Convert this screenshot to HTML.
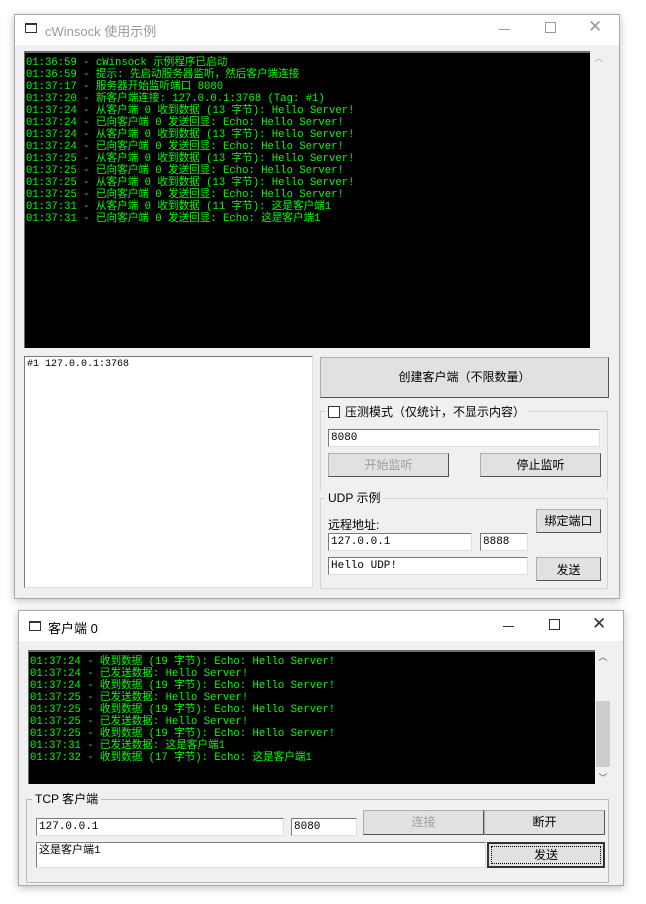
<!DOCTYPE html><html><head><meta charset="utf-8"><style>
*{margin:0;padding:0;box-sizing:border-box}
body{width:646px;height:904px;background:#fff;position:relative;overflow:hidden;font-family:"Liberation Sans","Noto Sans CJK SC",sans-serif;font-size:12px;color:#000}
.a{position:absolute}
.win{background:#f0f0f0;border:1px solid #aaa;box-shadow:0 2px 8px rgba(0,0,0,.25)}
.tb{background:#fff;left:0;right:0;top:0;height:30px}
.log{background:#000;color:#0f0;font-family:"Liberation Mono","WenQuanYi Zen Hei",monospace;font-size:10.6px;line-height:12px;white-space:pre;padding:4px 0 0 1px;border-top:2px solid #6d6d6d;border-left:1px solid #6d6d6d}
.sb{background:#f0f0f0}
.in{background:#fff;border:1px solid #7a7a7a;border-right-color:#ddd;border-bottom-color:#ddd;font-family:"Liberation Mono","WenQuanYi Zen Hei",monospace;font-size:11px;padding:1px 2px;line-height:14px}
.bt{background:#e1e1e1;border:1px solid #adadad;border-right-color:#555;border-bottom-color:#555;text-align:center;font-size:12px}
.gb{border:1px solid #d5d5d5}
.gl{background:#f0f0f0;padding:0 3px;font-size:12px;line-height:14px}
</style></head><body>
<!-- window 1 -->
<div class="a win" style="left:14px;top:14px;width:606px;height:585px">
 <div class="a tb"></div>
 <div class="a" style="left:10px;top:8px;width:12px;height:10px;border:1px solid #333;border-top-width:2px"></div>
 <div class="a" style="left:30px;top:6px;color:#999;font-size:13px">cWinsock 使用示例</div>
 <div class="a" style="left:484px;top:14px;width:11px;height:1px;background:#999"></div>
 <div class="a" style="left:530px;top:7px;width:11px;height:11px;border:1px solid #999"></div>
 <div class="a" style="left:573px;top:2px;color:#999;font-size:17px">✕</div>
 <div class="a log" style="left:9px;top:36px;width:566px;height:297px">01:36:59 - cWinsock 示例程序已启动
01:36:59 - 提示: 先启动服务器监听，然后客户端连接
01:37:17 - 服务器开始监听端口 8080
01:37:20 - 新客户端连接: 127.0.0.1:3768 (Tag: #1)
01:37:24 - 从客户端 0 收到数据 (13 字节): Hello Server!
01:37:24 - 已向客户端 0 发送回显: Echo: Hello Server!
01:37:24 - 从客户端 0 收到数据 (13 字节): Hello Server!
01:37:24 - 已向客户端 0 发送回显: Echo: Hello Server!
01:37:25 - 从客户端 0 收到数据 (13 字节): Hello Server!
01:37:25 - 已向客户端 0 发送回显: Echo: Hello Server!
01:37:25 - 从客户端 0 收到数据 (13 字节): Hello Server!
01:37:25 - 已向客户端 0 发送回显: Echo: Hello Server!
01:37:31 - 从客户端 0 收到数据 (11 字节): 这是客户端1
01:37:31 - 已向客户端 0 发送回显: Echo: 这是客户端1</div>
 <div class="a sb" style="left:575px;top:36px;width:17px;height:297px;color:#aaa;font-size:9px;text-align:center">︿</div>
 <div class="a in" style="left:9px;top:341px;width:289px;height:232px;font-size:10px">#1 127.0.0.1:3768</div>
 <div class="a bt" style="left:305px;top:342px;width:289px;height:41px;line-height:39px">创建客户端（不限数量）</div>
 <div class="a gb" style="left:305px;top:396px;width:288px;height:80px;border-bottom:none"></div>
 <div class="a gl" style="left:310px;top:390px"><span style="display:inline-block;width:12px;height:12px;border:1px solid #333;background:#fff;vertical-align:-2px;margin-right:5px"></span>压测模式（仅统计，不显示内容）</div>
 <div class="a in" style="left:313px;top:414px;width:272px;height:18px">8080</div>
 <div class="a bt" style="left:313px;top:438px;width:121px;height:24px;line-height:22px;color:#a0a0a0">开始监听</div>
 <div class="a bt" style="left:465px;top:438px;width:121px;height:24px;line-height:22px">停止监听</div>
 <div class="a gb" style="left:305px;top:483px;width:288px;height:91px"></div>
 <div class="a gl" style="left:310px;top:476px">UDP 示例</div>
 <div class="a" style="left:313px;top:501px;font-size:12px">远程地址:</div>
 <div class="a in" style="left:313px;top:518px;width:144px;height:18px">127.0.0.1</div>
 <div class="a in" style="left:465px;top:518px;width:48px;height:18px">8888</div>
 <div class="a bt" style="left:521px;top:494px;width:65px;height:24px;line-height:22px">绑定端口</div>
 <div class="a in" style="left:313px;top:542px;width:200px;height:18px">Hello UDP!</div>
 <div class="a bt" style="left:521px;top:542px;width:65px;height:24px;line-height:24px">发送</div>
</div>
<!-- window 2 -->
<div class="a win" style="left:18px;top:610px;width:606px;height:276px">
 <div class="a tb"></div>
 <div class="a" style="left:10px;top:10px;width:12px;height:10px;border:1px solid #333;border-top-width:2px"></div>
 <div class="a" style="left:29px;top:7px;font-size:13px">客户端 0</div>
 <div class="a" style="left:484px;top:15px;width:11px;height:1px;background:#333"></div>
 <div class="a" style="left:530px;top:8px;width:11px;height:11px;border:1px solid #333"></div>
 <div class="a" style="left:573px;top:3px;color:#333;font-size:17px">✕</div>
 <div class="a log" style="left:9px;top:39px;width:567px;height:134px">01:37:24 - 收到数据 (19 字节): Echo: Hello Server!
01:37:24 - 已发送数据: Hello Server!
01:37:24 - 收到数据 (19 字节): Echo: Hello Server!
01:37:25 - 已发送数据: Hello Server!
01:37:25 - 收到数据 (19 字节): Echo: Hello Server!
01:37:25 - 已发送数据: Hello Server!
01:37:25 - 收到数据 (19 字节): Echo: Hello Server!
01:37:31 - 已发送数据: 这是客户端1
01:37:32 - 收到数据 (17 字节): Echo: 这是客户端1</div>
 <div class="a sb" style="left:576px;top:39px;width:16px;height:134px;color:#555;font-size:9px;text-align:center">︿</div>
 <div class="a" style="left:577px;top:90px;width:14px;height:66px;background:#cdcdcd"></div>
 <div class="a" style="left:576px;top:160px;width:16px;color:#555;font-size:9px;text-align:center">﹀</div>
 <div class="a gb" style="left:7px;top:188px;width:583px;height:84px;border-color:#bbb"></div>
 <div class="a gl" style="left:13px;top:181px">TCP 客户端</div>
 <div class="a in" style="left:17px;top:207px;width:248px;height:18px">127.0.0.1</div>
 <div class="a in" style="left:272px;top:207px;width:66px;height:18px">8080</div>
 <div class="a bt" style="left:344px;top:199px;width:121px;height:25px;line-height:23px;color:#a0a0a0">连接</div>
 <div class="a bt" style="left:465px;top:199px;width:121px;height:25px;line-height:23px">断开</div>
 <div class="a in" style="left:17px;top:231px;width:450px;height:26px">这是客户端1</div>
 <div class="a bt" style="left:468px;top:231px;width:118px;height:26px;line-height:22px;border:2px solid #333;outline:1px dotted #000;outline-offset:-5px">发送</div>
</div>
</body></html>
